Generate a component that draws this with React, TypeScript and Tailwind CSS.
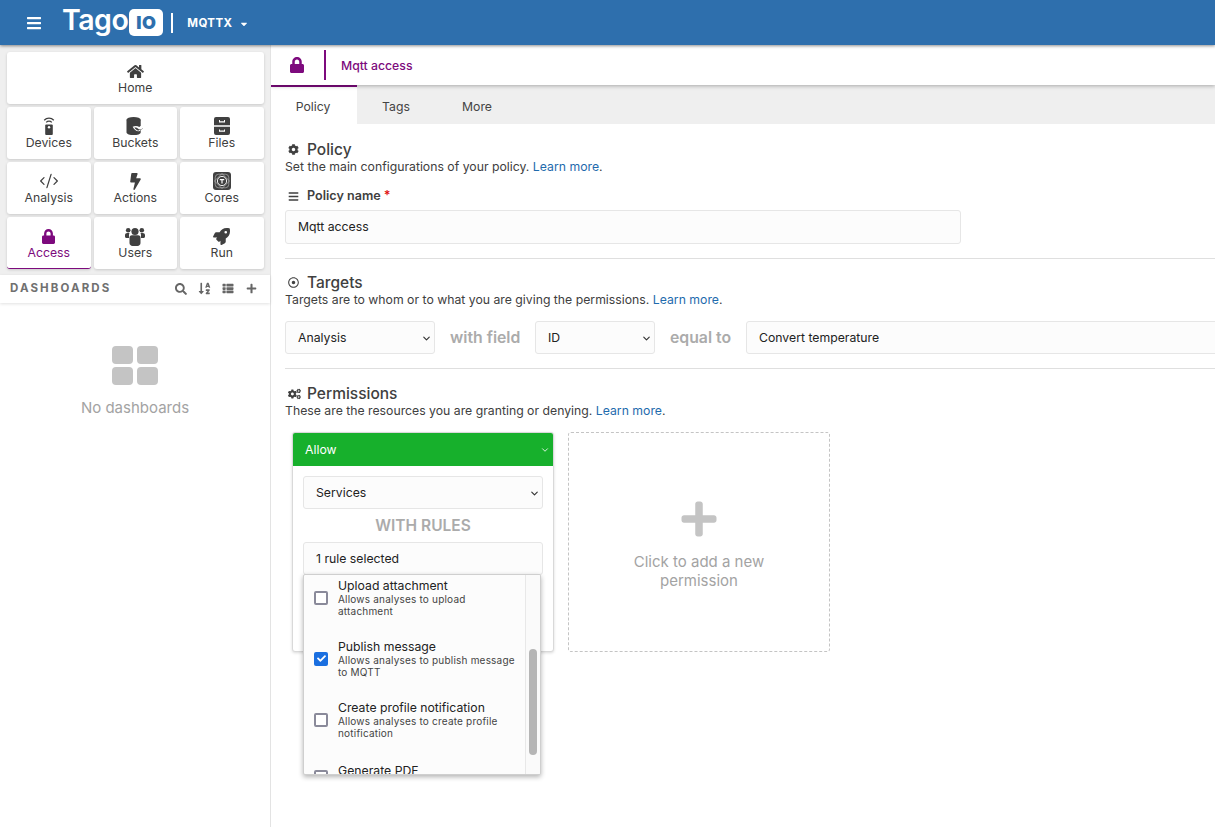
import React from "react";
import { FaHome, FaLock, FaRocket, FaBolt, FaSearch, FaSortAlphaDown, FaThList, FaPlus, FaCog, FaCogs, FaBars, FaCaretDown, FaCheck, FaRegDotCircle } from "react-icons/fa";
import { ChevronDown, CodeXml } from "lucide-react";

const Remote = () => (
  <svg viewBox="0 0 14 18" className="w-[14px] h-[18px]" fill="none" stroke="#404040">
    <path d="M2.2 3.2a6.8 6.8 0 0 1 9.6 0" strokeWidth="1.3" />
    <path d="M4.2 5.4a4 4 0 0 1 5.6 0" strokeWidth="1.3" />
    <rect x="3.2" y="7.5" width="7.6" height="10.5" rx="1" fill="#404040" stroke="none" />
    <circle cx="7" cy="10.3" r="1.2" fill="#fff" stroke="none" />
  </svg>
);
const Bucket = () => (
  <svg viewBox="0 0 20 19" className="w-[19px] h-[18px]" fill="#404040">
    <ellipse cx="8" cy="3" rx="7.5" ry="3" />
    <path d="M.5 3h15v13c0 4-15 4-15 0z" />
    <path d="M14 10.5c1.6-1.7 5-1.5 5.5.4.3 1.4-1.5 2.7-3.6 2.6l-1.6 1.4c-2.5 1-5.7-1.2-7.3-4.6 2.5-1.2 5-1 7 .2z" fill="#fff" />
    <path d="M8.8 11.2c1.8-.3 3.4.4 4.6 1.7 1.5.3 3.6 0 4.6-1.3-.2 1.2-2.3 2-3.7 1.9l-1.4.9c-1.6-.4-3-1.4-4.1-3.2z" />
  </svg>
);
const Files = () => (
  <svg viewBox="0 0 16 18" className="w-[16px] h-[18px]" fill="#404040">
    <path d="M2 0h12a2 2 0 0 1 2 2v6.3H0V2a2 2 0 0 1 2-2zM0 9.7h16V16a2 2 0 0 1-2 2H2a2 2 0 0 1-2-2z" />
    <path d="M5 3h1v1.2h4V3h1v2.4H5zM5 12.4h1v1.2h4v-1.2h1v2.4H5z" fill="#fff" />
  </svg>
);
const Core = () => (
  <svg viewBox="0 0 18 18" className="w-[18px] h-[18px]">
    <rect width="18" height="18" rx="3" fill="#404040" />
    <rect x="2.2" y="2.2" width="13.6" height="13.6" rx="3.5" fill="none" stroke="#d8d8d8" strokeWidth="0.5" />
    <path d="M9 1.5l7.5 7.5-7.5 7.5L1.5 9z" fill="none" stroke="#d8d8d8" strokeWidth="0.5" />
    <circle cx="9" cy="9" r="4.6" fill="none" stroke="#fff" strokeWidth="0.9" />
    <path d="M6.8 7.1h4.4v1.2H9.6v3.3H8.4V8.3H6.8z" fill="#fff" />
  </svg>
);
const Group = () => (
  <svg viewBox="0 0 20 19" className="w-[20px] h-[19px]" fill="#404040">
    <circle cx="10" cy="4.5" r="3.6" />
    <circle cx="3.2" cy="3.2" r="2.3" />
    <circle cx="16.8" cy="3.2" r="2.3" />
    <path d="M0 8.2C0 6.8 1 6 2.2 6h2.3c-.3.6-.5 1.200-.5 2v3H1.500C.6 11 0 10.400 0 9.500zM20 8.200C20 6.800 19 6 17.800 6h-2.300c.3.600.5 1.200.5 2v3h2.500c.900 0 1.500-.6 1.500-1.500z" />
    <path d="M6.800 8.300h6.400c1.500 0 2.300 1 2.300 2.300v5.400c0 1.600-1.300 3-3 3H7.500c-1.700 0-3-1.400-3-3v-5.400c0-1.300.8-2.300 2.300-2.300z" />
  </svg>
);

const Tile = ({ icon, label, active, wide }: { icon: React.ReactNode; label: string; active?: boolean; wide?: boolean }) => (
  <div className={`h-[51.7px] bg-white rounded-[3px] shadow-[0_1px_3px_rgba(0,0,0,0.16)] flex flex-col items-center justify-start pt-[10px] text-[12.25px] leading-[15px] ${wide ? "col-span-3" : ""} ${active ? "text-[#7d0a7d] border-b border-[#7d0a7d]" : "text-[#404040]"}`}>
    <div className="h-[19px] flex items-center justify-center">{icon}</div>
    <div className="-mt-[1px]">{label}</div>
  </div>
);

const Heading = ({ icon, title }: { icon: React.ReactNode; title: string }) => (
  <div className="flex items-center h-[19px] text-[#404040]">
    <div className="w-[22px] pl-[3px] flex items-center">{icon}</div>
    <span className="text-[15.5px] font-medium">{title}</span>
  </div>
);

const Desc = ({ text }: { text: string }) => (
  <div className="text-[12.25px] leading-[15px] text-[#404040]">
    {text} <span className="text-[#1f6bad]">Learn more</span>.
  </div>
);

const Field = ({ text, className, select }: { text: string; className: string; select?: boolean }) => (
  <div className={`h-[33px] border border-[#e6e6e6] rounded-[3px] bg-[#fcfcfc] flex items-center justify-between pt-[1px] pl-[12px] pr-[2px] text-[12.25px] text-[#222] shrink-0 ${className}`}>
    <span>{text}</span>
    {select && <ChevronDown className="text-[#333] w-[11px] h-[11px]" strokeWidth={2.5} />}
  </div>
);

const Rule = ({ title, desc, checked, rowClass, boxClass }: { title: string; desc: string[]; checked?: boolean; rowClass?: string; boxClass?: string }) => (
  <div className={`flex h-[61px] shrink-0 ${rowClass ?? "items-center"}`}>
    <div className={`w-[34px] pl-[10px] shrink-0 ${boxClass ?? ""}`}>
      {checked ? (
        <div className="w-[14px] h-[14px] rounded-[2px] bg-[#1a6fe0] flex items-center justify-center">
          <FaCheck className="text-white w-[9px] h-[9px]" />
        </div>
      ) : (
        <div className="w-[14px] h-[14px] rounded-[2px] border-2 border-[#8a8a9a] bg-white" />
      )}
    </div>
    <div>
      <div className="text-[12.25px] leading-[15px] text-[#222]">{title}</div>
      {desc.map((d) => (
        <div key={d} className="text-[10px] leading-[12.5px] text-[#444] tracking-[0.2px]">{d}</div>
      ))}
    </div>
  </div>
);

export default function App() {
  return (
    <div className="h-[827px] w-[1215px] overflow-hidden flex flex-col bg-white font-['Inter',sans-serif]">
      <header className="h-[45px] shrink-0 bg-[#2e6fad] flex items-center text-white shadow-[0_1px_3px_rgba(0,0,0,0.45)] relative z-20">
        <FaBars className="ml-[26px] w-[16px] h-[16px]" />
        <div className="ml-[20px] flex items-center">
          <span className="text-[28.5px] leading-none font-semibold tracking-[-0.5px] -mt-[4px]">Tago</span>
          <span className="ml-[1px] w-[34px] h-[27px] bg-white rounded-[5px] text-[#2e6fad] text-[18px] font-black flex items-center justify-center leading-none tracking-[0.5px]">IO</span>
        </div>
        <div className="ml-[8px] w-[1.5px] h-[20px] bg-white" />
        <span className="ml-[14.5px] mt-[3px] text-[11.5px] font-bold tracking-[0.4px]">MQTTX</span>
        <FaCaretDown className="ml-[7px] mt-[3px] w-[10px] h-[10px]" />
      </header>
      <div className="flex flex-1 min-h-0">
        <aside className="w-[271px] shrink-0 border-r border-[#e3e3e3] bg-white flex flex-col">
          <div className="bg-[#efefef] pt-[7px] pb-[6px] px-[7px]">
            <div className="grid grid-cols-3 gap-x-[3px] gap-y-[3.3px] w-[256.5px]">
              <Tile wide label="Home" icon={<FaHome className="w-[17px] h-[15px] text-[#404040]" />} />
              <Tile label="Devices" icon={<Remote />} />
              <Tile label="Buckets" icon={<Bucket />} />
              <Tile label="Files" icon={<Files />} />
              <Tile label="Analysis" icon={<CodeXml className="w-[20px] h-[20px] text-[#404040]" strokeWidth={1.5} />} />
              <Tile label="Actions" icon={<FaBolt className="w-[11px] h-[17px] text-[#404040]" />} />
              <Tile label="Cores" icon={<Core />} />
              <Tile active label="Access" icon={<FaLock className="w-[13px] h-[15px]" />} />
              <Tile label="Users" icon={<Group />} />
              <Tile label="Run" icon={<FaRocket className="w-[17px] h-[17px] text-[#404040]" />} />
            </div>
          </div>
          <div className="h-[28px] shrink-0 bg-white shadow-[0_1px_3px_rgba(0,0,0,0.12)] flex items-center pl-[10px] pr-[13px] relative">
            <span className="text-[11.5px] font-bold tracking-[2.1px] text-[#707070]">DASHBOARDS</span>
            <div className="ml-auto flex items-center gap-[11px] text-[#666]">
              <FaSearch className="w-[12px] h-[12px]" />
              <FaSortAlphaDown className="w-[13px] h-[13px]" />
              <FaThList className="w-[12px] h-[11px]" />
              <FaPlus className="ml-[1px] w-[11px] h-[11px]" />
            </div>
          </div>
          <div className="flex flex-col items-center pt-[43px]">
            <div className="grid grid-cols-2 gap-[3.5px]">
              <div className="w-[21.5px] h-[18px] bg-[#c4c4c4] rounded-[4px]" />
              <div className="w-[21.5px] h-[18px] bg-[#c4c4c4] rounded-[4px]" />
              <div className="w-[21.5px] h-[18px] bg-[#c4c4c4] rounded-[4px]" />
              <div className="w-[21.5px] h-[18px] bg-[#c4c4c4] rounded-[4px]" />
            </div>
            <div className="mt-[14px] text-[15px] leading-[18px] text-[#a3a3a3]">No dashboards</div>
          </div>
        </aside>
        <main className="flex-1 min-w-0 overflow-hidden flex flex-col">
          <div className="h-[40px] shrink-0 flex items-center bg-white shadow-[0_1px_4px_rgba(0,0,0,0.3)] relative z-10 text-[#7d0a7d]">
            <FaLock className="ml-[19px] w-[14px] h-[16px]" />
            <div className="ml-[20px] w-[1.5px] h-[30px] bg-[#7d0a7d]" />
            <span className="ml-[15.5px] mt-[2px] text-[12.25px] font-medium">Mqtt access</span>
          </div>
          <div className="h-[39px] shrink-0 bg-[#efefef] flex text-[12.25px] text-[#444]">
            <div className="w-[86px] bg-white border-t-2 border-[#7d0a7d] flex items-center justify-center pt-[3px] pr-[2px]">Policy</div>
            <div className="w-[80px] flex items-center justify-center pt-[5px] pr-[2px]">Tags</div>
            <div className="w-[82px] flex items-center justify-center pt-[5px] pr-[2px]">More</div>
          </div>
          <div className="pl-[14px] pt-[16px] flex flex-col">
            <Heading icon={<FaCog className="w-[11px] h-[11px]" />} title="Policy" />
            <Desc text="Set the main configurations of your policy." />
            <div className="mt-[15px] flex items-center h-[15px] text-[12.6px] font-semibold text-[#404040]">
              <FaBars className="ml-[3px] mr-[8px] w-[11px] h-[11px]" />
              Policy name <span className="text-[#e01010] ml-[3px]">*</span>
            </div>
            <Field text="Mqtt access" className="mt-[6px] w-[676px] h-[34px]" />
            <div className="mt-[14px] h-px bg-[#dfdfdf]" />
            <div className="mt-[14px]">
              <Heading icon={<FaRegDotCircle className="w-[11px] h-[11px]" />} title="Targets" />
            </div>
            <Desc text="Targets are to whom or to what you are giving the permissions." />
            <div className="mt-[14px] flex items-center">
              <Field select text="Analysis" className="w-[150px]" />
              <span className="ml-[15px] w-[85px] shrink-0 text-[15.8px] font-semibold text-[#ababab]">with field</span>
              <Field select text="ID" className="w-[120px]" />
              <span className="ml-[15px] w-[76px] shrink-0 text-[15.8px] font-semibold text-[#ababab]">equal to</span>
              <Field text="Convert temperature" className="w-[500px]" />
            </div>
            <div className="mt-[14px] h-px bg-[#dfdfdf]" />
            <div className="mt-[15px]">
              <Heading icon={<FaCogs className="w-[13px] h-[12px]" />} title="Permissions" />
            </div>
            <Desc text="These are the resources you are granting or denying." />
            <div className="mt-[14px] ml-[7px] flex gap-[14px]">
              <div className="w-[262px] h-[220px] rounded-[3px] border border-[#d9d9d9] shadow-[0_1px_3px_rgba(0,0,0,0.15)] bg-white relative">
                <div className="h-[33px] bg-[#17b02c] rounded-t-[2px] flex items-center justify-between pt-[1px] pl-[12px] pr-[3px] text-white text-[12.25px]">
                  <span>Allow</span>
                  <ChevronDown className="w-[10px] h-[10px]" strokeWidth={2} />
                </div>
                <div className="px-[10px] pt-[10px]">
                  <Field select text="Services" className="w-full" />
                  <div className="h-[33px] flex items-center justify-center text-[15.5px] font-semibold text-[#ababab]">WITH RULES</div>
                  <Field text="1 rule selected" className="w-full" />
                </div>
                <div className="absolute left-[10px] top-[141px] w-[238px] h-[201px] bg-[#fcfcfc] border border-[#cfcfcf] rounded-[2px] shadow-[0_2px_5px_rgba(0,0,0,0.3)] overflow-hidden flex z-10">
                  <div className="flex-1 flex flex-col -mt-[8px]">
                    <Rule title="Upload attachment" desc={["Allows analyses to upload", "attachment"]} />
                    <Rule checked title="Publish message" desc={["Allows analyses to publish message", "to MQTT"]} />
                    <Rule title="Create profile notification" desc={["Allows analyses to create profile", "notification"]} />
                    <Rule title="Generate PDF" desc={[]} rowClass="items-start pt-[13px]" boxClass="mt-[7px]" />
                  </div>
                  <div className="w-[15px] shrink-0 border-l border-[#e8e8e8] bg-[#fafafa] pt-[74px] flex justify-center">
                    <div className="w-[8px] h-[106px] bg-[#b5b5b5] rounded-full" />
                  </div>
                </div>
              </div>
              <div className="w-[262px] h-[220px] border border-dashed border-[#c4c4c4] rounded-[3px] flex flex-col items-center pt-[66px]">
                <FaPlus className="w-[40px] h-[40px] text-[#c4c4c4]" />
                <div className="mt-[13px] text-[15px] leading-[19px] text-[#a3a3a3] text-center">Click to add a new<br />permission</div>
              </div>
            </div>
          </div>
        </main>
      </div>
    </div>
  );
}
